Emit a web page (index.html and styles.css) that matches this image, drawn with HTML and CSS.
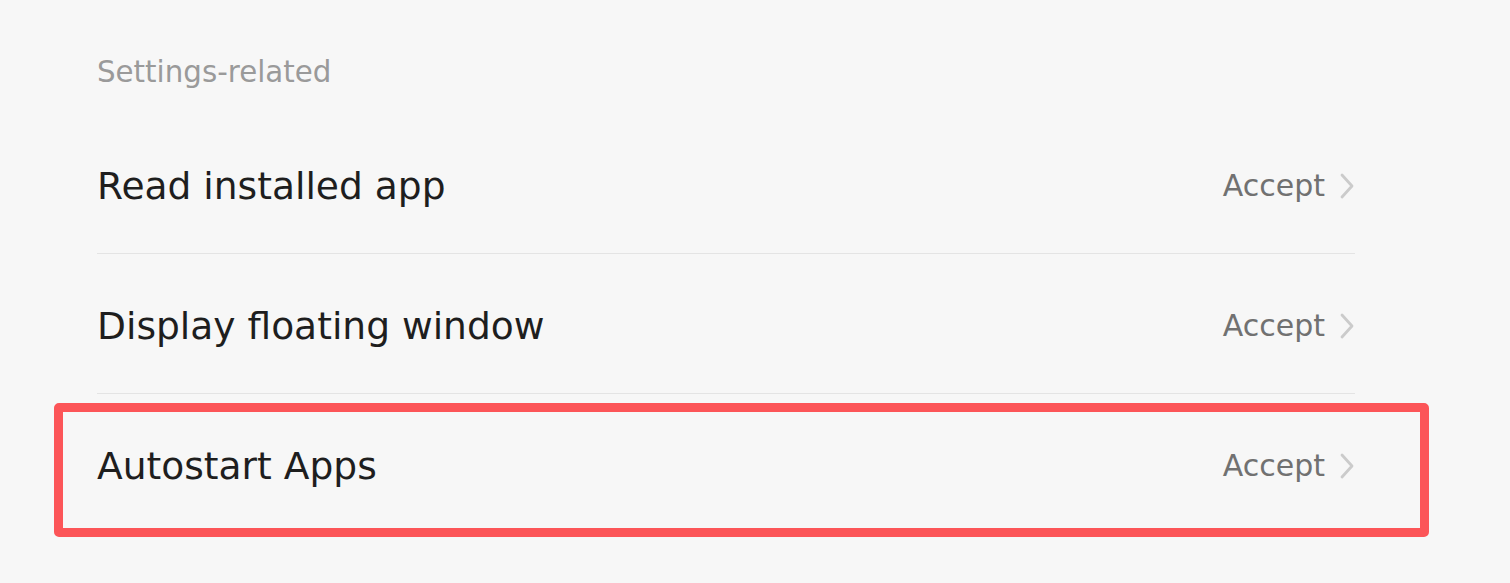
FILE: index.html
```html
<!DOCTYPE html>
<html>
<head>
<meta charset="utf-8">
<link rel="stylesheet" href="styles.css">
</head>
<body>
<div class="page">
  <div class="section-title">Settings-related</div>
  <div class="list">
    <div class="row">
      <span class="label">Read installed app</span>
      <span class="value">Accept<svg class="chev" width="14" height="26" viewBox="0 0 14 26"><path d="M2 2 L12 13 L2 24" fill="none" stroke="#cbcbcb" stroke-width="2.8" stroke-linecap="round" stroke-linejoin="round"/></svg></span>
    </div>
    <div class="row">
      <span class="label">Display floating window</span>
      <span class="value">Accept<svg class="chev" width="14" height="26" viewBox="0 0 14 26"><path d="M2 2 L12 13 L2 24" fill="none" stroke="#cbcbcb" stroke-width="2.8" stroke-linecap="round" stroke-linejoin="round"/></svg></span>
    </div>
    <div class="row last">
      <span class="label">Autostart Apps</span>
      <span class="value">Accept<svg class="chev" width="14" height="26" viewBox="0 0 14 26"><path d="M2 2 L12 13 L2 24" fill="none" stroke="#cbcbcb" stroke-width="2.8" stroke-linecap="round" stroke-linejoin="round"/></svg></span>
      <div class="highlight"></div>
    </div>
  </div>
</div>
</body>
</html>
```
FILE: styles.css
```css
html, body {
  margin: 0;
  padding: 0;
  background: #f7f7f7;
}
body {
  font-family: "DejaVu Sans", "Liberation Sans", sans-serif;
  width: 1510px;
  height: 583px;
  overflow: hidden;
}
.page {
  padding: 52px 155px 0 97px;
}
.section-title {
  font-size: 29.3px;
  color: #9a9a9a;
  line-height: 40px;
  height: 62px;
}
.list {
  display: flex;
  flex-direction: column;
}
.row {
  position: relative;
  display: flex;
  align-items: center;
  justify-content: space-between;
  height: 139px;
  box-sizing: content-box;
  border-bottom: 1px solid #e4e4e4;
}
.row.last {
  border-bottom: none;
}
.label {
  font-size: 37.6px;
  color: #1e1e1e;
  padding-top: 5px;
}
.value {
  display: flex;
  align-items: center;
  font-size: 30px;
  color: #717171;
  padding-top: 4px;
}
.chev {
  margin-left: 15px;
  margin-right: 1px;
}
.highlight {
  position: absolute;
  left: -43px;
  right: -74px;
  top: 9px;
  bottom: -4px;
  border: 9px solid #fc5558;
  border-radius: 5px;
}
```
